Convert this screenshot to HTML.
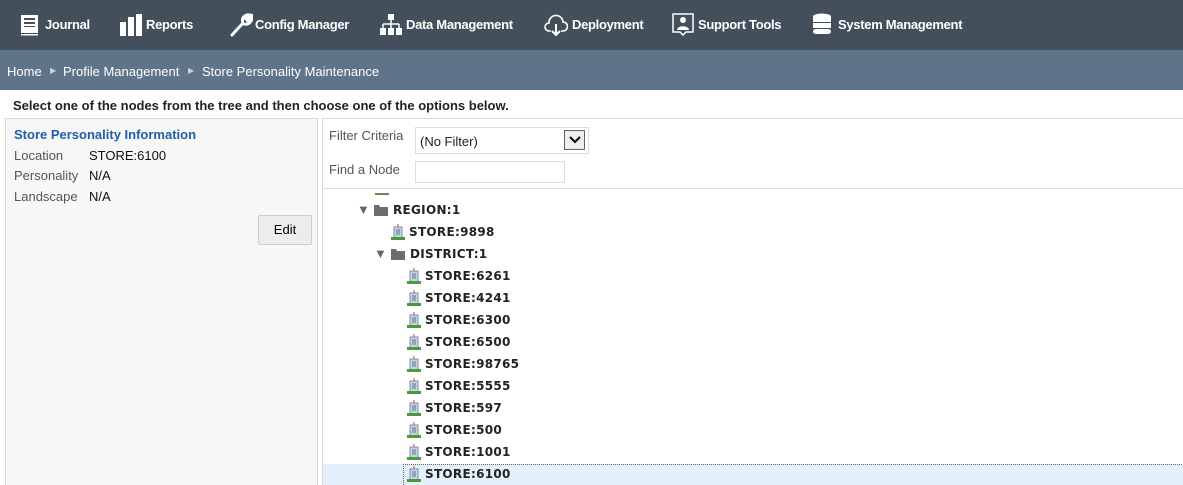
<!DOCTYPE html>
<html style="overflow:hidden;height:485px"><head><style>
body{margin:0;width:1183px;height:485px;overflow:hidden;font-family:"Liberation Sans",Arial,sans-serif;background:#fff;position:relative}
.top{position:absolute;left:0;top:0;width:1183px;height:50px;background:#434f5a}
.nav{position:absolute;top:17px;color:#fff;font-weight:bold;font-size:13px;letter-spacing:-0.3px}
.crumb{position:absolute;left:0;top:50px;width:1183px;height:40px;background:#5f7489;color:#fff;font-size:13px}
.crumb span{position:absolute;top:14px}
.tri{font-size:8px;color:#c9d2db}
.msg{position:absolute;left:13px;top:98px;font-size:13px;font-weight:bold;color:#222}
.left{position:absolute;left:5px;top:118px;width:311px;height:380px;border:1px solid #d8d8d8;background:#f7f7f7}
.lbl{position:absolute;font-size:13px;color:#555}
.val{position:absolute;font-size:13px;color:#111}
.edit{position:absolute;left:252px;top:96px;width:52px;height:28px;border:1px solid #ccc;background:#ececec;font-size:13px;text-align:center;line-height:28px;border-radius:2px}
.right{position:absolute;left:322px;top:118px;width:870px;height:380px;border-left:1px solid #d8d8d8;border-top:1px solid #d8d8d8}
.t{position:absolute;font-family:"DejaVu Sans",Verdana,sans-serif;font-weight:bold;font-size:12px;color:#222;letter-spacing:0.3px}
.arr{position:absolute;font-size:13px;color:#666}
svg{position:absolute}
</style></head><body>
<div class="top">
<svg style="left:20px;top:14px" width="20" height="22" viewBox="0 0 20 22"><rect x="1" y="1" width="17" height="18" fill="#fff"/><rect x="4" y="4" width="11" height="2" fill="#434f5a"/><rect x="4" y="8" width="11" height="2" fill="#434f5a"/><rect x="4" y="12" width="11" height="1" fill="#434f5a"/><rect x="1" y="20" width="17" height="1.5" fill="#fff"/></svg>
<span class="nav" style="left:45px">Journal</span>
<svg style="left:120px;top:13px" width="24" height="24"><rect x="0" y="9" width="6" height="14" fill="#fff"/><rect x="8" y="4" width="6" height="19" fill="#fff"/><rect x="16" y="1" width="6" height="22" fill="#fff"/></svg>
<span class="nav" style="left:146px">Reports</span>
<svg style="left:229px;top:13px" width="24" height="24" viewBox="0 0 24 24"><path d="M3 22 L14 10 M14 10 C12 5 16 1 21 2 L17 6 L19 8 L23 4 C23 10 18 12 15 11" stroke="#fff" stroke-width="3" fill="none" stroke-linecap="round"/></svg>
<span class="nav" style="left:255px">Config Manager</span>
<svg style="left:380px;top:14px" width="22" height="22"><rect x="8" y="0" width="6" height="6" fill="#fff"/><path d="M11 6v4M3 10h16M3 10v4M11 10v4M19 10v4" stroke="#fff" stroke-width="1.5"/><rect x="0" y="14" width="6" height="7" fill="#fff"/><rect x="8" y="14" width="6" height="7" fill="#fff"/><rect x="16" y="14" width="6" height="7" fill="#fff"/></svg>
<span class="nav" style="left:406px">Data Management</span>
<svg style="left:544px;top:14px" width="24" height="24" viewBox="0 0 24 24"><path d="M7 17 H5 A4 4 0 0 1 5 9 A7 7 0 0 1 19 8 A4.5 4.5 0 0 1 19 17 H17" stroke="#fff" stroke-width="1.6" fill="none"/><path d="M12 10 V21 M8 17 L12 21 L16 17" stroke="#fff" stroke-width="2" fill="none"/></svg>
<span class="nav" style="left:572px">Deployment</span>
<svg style="left:672px;top:13px" width="22" height="24" viewBox="0 0 22 24"><path d="M1 1 H21 V19 H14 L11 22 L8 19 H1 Z" stroke="#fff" stroke-width="1.5" fill="none"/><circle cx="11" cy="7" r="3" fill="#fff"/><path d="M5 17 C5 12 17 12 17 17 Z" fill="#fff"/></svg>
<span class="nav" style="left:698px">Support Tools</span>
<svg style="left:812px;top:13px" width="20" height="24"><ellipse cx="10" cy="3.5" rx="9" ry="3" fill="#fff"/><rect x="1" y="4" width="18" height="5" fill="#fff"/><rect x="1" y="10" width="18" height="5" fill="#fff"/><rect x="1" y="16" width="18" height="5" fill="#fff" rx="3"/></svg>
<span class="nav" style="left:838px">System Management</span>
</div>
<div class="crumb"><span style="left:7px">Home</span><span class="tri" style="left:50px;top:16px">&#9654;</span><span style="left:63px">Profile Management</span><span class="tri" style="left:188px;top:16px">&#9654;</span><span style="left:202px">Store Personality Maintenance</span></div>
<div class="msg">Select one of the nodes from the tree and then choose one of the options below.</div>
<div class="left">
<div style="position:absolute;left:8px;top:8px;font-size:13px;font-weight:bold;color:#1f5fa8">Store Personality Information</div>
<div class="lbl" style="left:8px;top:29px">Location</div><div class="val" style="left:83px;top:29px">STORE:6100</div>
<div class="lbl" style="left:8px;top:49px">Personality</div><div class="val" style="left:83px;top:49px">N/A</div>
<div class="lbl" style="left:8px;top:70px">Landscape</div><div class="val" style="left:83px;top:70px">N/A</div>
<div class="edit">Edit</div>
</div>
<div class="right">
<div class="lbl" style="left:6px;top:9px">Filter Criteria</div>
<div style="position:absolute;left:92px;top:8px;width:172px;height:25px;border:1px solid #ddd;font-size:13px;color:#222"><span style="position:absolute;left:4px;top:6px">(No Filter)</span><div style="position:absolute;right:3px;top:2px;width:19px;height:18px;border:1px solid #666;background:#eee"><svg style="left:4px;top:5px" width="12" height="8"><path d="M1 1 L6 6 L11 1" stroke="#000" stroke-width="2" fill="none"/></svg></div></div>
<div class="lbl" style="left:6px;top:43px">Find a Node</div>
<div style="position:absolute;left:92px;top:42px;width:148px;height:20px;border:1px solid #ddd"></div>
<div style="position:absolute;left:0;top:69px;width:870px;border-top:1px solid #ddd"></div>
<div style="position:absolute;left:52px;top:74px;width:14px;height:2px;background:#6a8a5a"></div>
<div style="position:absolute;left:0;top:345px;width:870px;height:40px;background:#e4f0fb"></div>
<div style="position:absolute;left:80px;top:345px;width:790px;height:40px;border-top:1px dotted #666;border-left:1px dotted #666"></div>
</div>
<div id="tree"></div>
<script>
var rows=[["f",357,"REGION:1"],["s",391,"STORE:9898"],["f",374,"DISTRICT:1"],["s",407,"STORE:6261"],["s",407,"STORE:4241"],["s",407,"STORE:6300"],["s",407,"STORE:6500"],["s",407,"STORE:98765"],["s",407,"STORE:5555"],["s",407,"STORE:597"],["s",407,"STORE:500"],["s",407,"STORE:1001"],["s",407,"STORE:6100"]];
var h="";rows.forEach(function(r,i){var y=203+i*22;
if(r[0]=="f"){h+='<span class="arr" style="left:'+r[1]+'px;top:'+(y-1)+'px">&#9660;</span><svg style="left:'+(r[1]+17)+'px;top:'+(y+1)+'px" width="14" height="12"><path d="M0 1h5l1 2h8v9H0z" fill="#6d6d6d"/></svg><span class="t" style="left:'+(r[1]+36)+'px;top:'+y+'px">'+r[2]+'</span>';}
else{h+='<svg style="left:'+r[1]+'px;top:'+(y-1)+'px" width="14" height="16"><path d="M7 0v3" stroke="#d33"/><rect x="3" y="3" width="8" height="11" fill="#c8d4e3" stroke="#7a8ea8"/><path d="M5 6h4M5 8h4M5 10h4" stroke="#5d7390"/><rect x="0" y="13" width="14" height="3" fill="#4a9a3a"/></svg><span class="t" style="left:'+(r[1]+18)+'px;top:'+y+'px">'+r[2]+'</span>';}});
document.getElementById("tree").innerHTML=h;
</script>
</body></html>
